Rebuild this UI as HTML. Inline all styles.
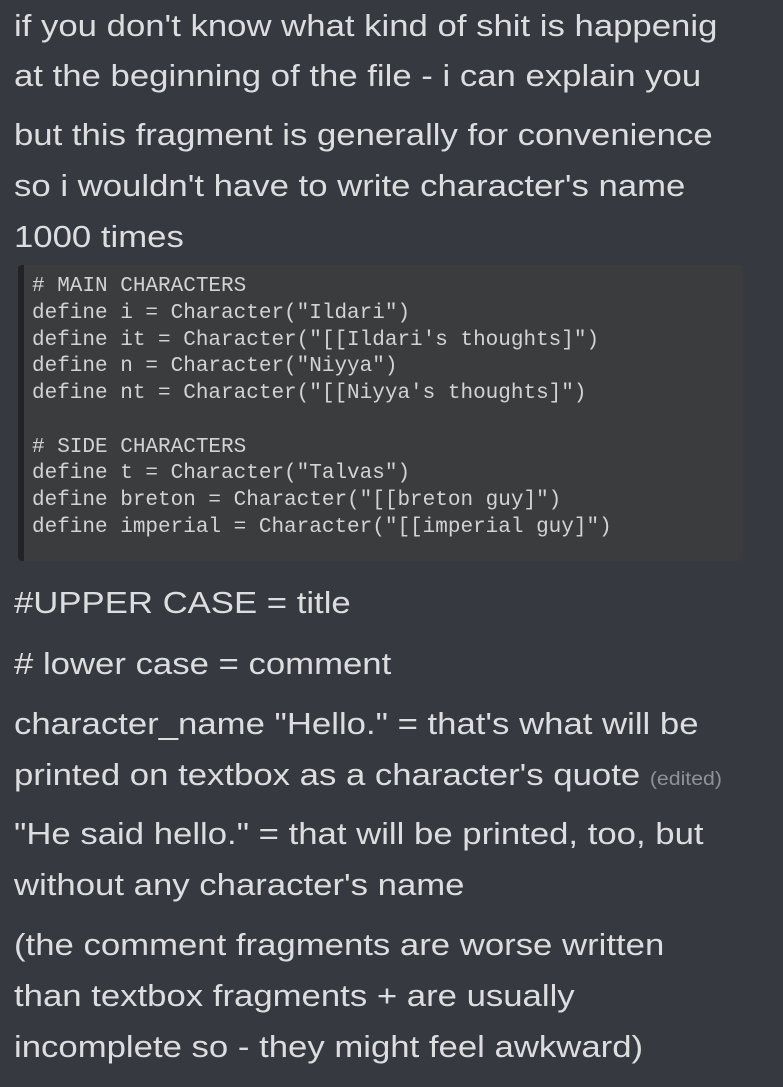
<!DOCTYPE html>
<html><head><meta charset="utf-8"><style>
html,body{margin:0;padding:0;width:783px;height:1087px;overflow:hidden;background:#36393f;}
body{font-family:"Liberation Sans","DejaVu Sans",sans-serif;color:#dcddde;font-size:31px;position:relative;}
.l{position:absolute;left:14px;white-space:nowrap;line-height:34px;transform:scaleX(1.12);transform-origin:0 0;}
.ed{font-size:19px;color:#8e9297;}
.code{position:absolute;left:18px;top:265px;width:725px;height:296px;background:#3b3c3e;border-left:6px solid #222326;box-sizing:border-box;border-radius:4px;}
.c{position:absolute;left:32px;font-family:"Liberation Mono","DejaVu Sans Mono",monospace;font-size:21px;color:#d2d3d4;white-space:pre;line-height:26.75px;}
</style></head><body>
<div class="l" style="top:9px">if you don't know what kind of shit is happenig</div>
<div class="l" style="top:59px">at the beginning of the file - i can explain you</div>
<div class="l" style="top:118px">but this fragment is generally for convenience</div>
<div class="l" style="top:169px">so i wouldn't have to write character's name</div>
<div class="l" style="top:220px">1000 times</div>
<div class="code"></div>
<div class="c" style="top:274px"># MAIN CHARACTERS
define i = Character("Ildari")
define it = Character("[[Ildari's thoughts]")
define n = Character("Niyya")
define nt = Character("[[Niyya's thoughts]")

# SIDE CHARACTERS
define t = Character("Talvas")
define breton = Character("[[breton guy]")
define imperial = Character("[[imperial guy]")</div>
<div class="l" style="top:586px">#UPPER CASE = title</div>
<div class="l" style="top:647px"># lower case = comment</div>
<div class="l" style="top:707px">character_name "Hello." = that's what will be</div>
<div class="l" style="top:758px">printed on textbox as a character's quote <span class="ed">(edited)</span></div>
<div class="l" style="top:817px">"He said hello." = that will be printed, too, but</div>
<div class="l" style="top:868px">without any character's name</div>
<div class="l" style="top:928px">(the comment fragments are worse written</div>
<div class="l" style="top:979px">than textbox fragments + are usually</div>
<div class="l" style="top:1030px">incomplete so - they might feel awkward)</div>
</body></html>
